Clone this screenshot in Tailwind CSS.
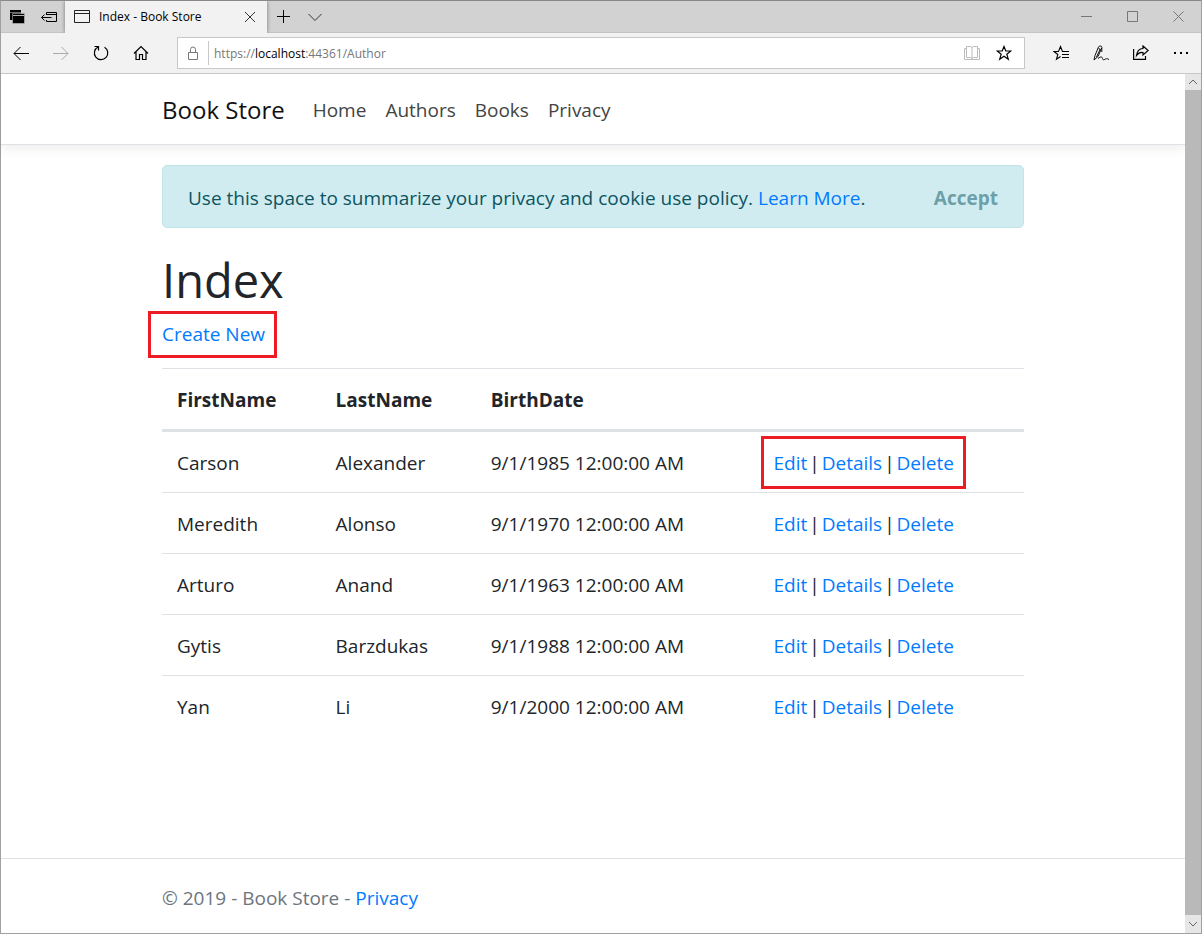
<!DOCTYPE html>
<html lang="en">
<head>
<meta charset="utf-8">
<meta name="viewport" content="width=device-width, initial-scale=1">
<title>Index - Book Store</title>
<script src="https://cdn.jsdelivr.net/npm/@tailwindcss/browser@4"></script>
</head>
<body class="bg-white font-['Open_Sans','Noto_Sans',sans-serif] text-[19px] leading-[30px] text-[#212529]">
<div class="flex min-h-screen flex-col border border-[#a0a0a0] border-t-[#888]">

  <!-- Tab strip -->
  <div class="flex h-8 items-stretch border-b border-[#c4c4c4] bg-[#d2d2d2] text-xs text-black">
    <div class="flex w-16 items-center">
      <button type="button" aria-label="Tabs set aside" class="flex w-8 justify-center"><svg class="size-4" viewBox="0 0 16 16"><path d="M1 1h11v10H1z" fill="#000"/><path d="M1 3.500h11" stroke="#999" stroke-width=".7"/><path d="M3.500 4.500h12v10h-12z" fill="#000" stroke="#d2d2d2" stroke-width=".5"/><path d="M4 6.500h11" stroke="#ddd" stroke-width=".8"/></svg></button>
      <button type="button" aria-label="Set tabs aside" class="flex w-8 justify-center"><svg class="size-4" viewBox="0 0 16 16" fill="none" stroke="#000"><path d="M5.500 6V3.500h10v9h-10V11M5.500 5.500h10M.5 8.500h10M3.500 5.500l-3 3 3 3"/></svg></button>
    </div>
    <div class="-mb-px flex w-[202px] items-center bg-[#f2f2f2] px-[9px] shadow-[0_0_4px_#777] [clip-path:inset(0_-4px_0_-4px)]">
      <svg class="size-4" viewBox="0 0 16 16" fill="none" stroke="#222"><path d="M.5 1.500h15v12H.5zM.5 4.500h15"/></svg>
      <span class="ml-[9px] flex-1">Index - Book Store</span>
      <button type="button" aria-label="Close tab" class="mr-0.5"><svg class="size-3" viewBox="0 0 12 12" fill="none" stroke="#333"><path d="M1 1l10 10M11 1L1 11"/></svg></button>
    </div>
    <button type="button" aria-label="New tab" class="flex w-8 items-center justify-center"><svg class="size-[13px]" viewBox="0 0 13 13" stroke="#000"><path d="M0 6.500h13M6.500 0v13"/></svg></button>
    <button type="button" aria-label="Tab actions" class="flex w-8 items-center justify-center"><svg class="size-[14px]" viewBox="0 0 14 14" fill="none" stroke="#333"><path d="M.5 4l6.500 6.500L13.500 4"/></svg></button>
    <div class="ml-auto flex">
      <button type="button" aria-label="Minimize" class="flex w-[46px] items-center justify-center"><svg class="size-[11px]" viewBox="0 0 11 11" stroke="#777"><path d="M0 5.500h11"/></svg></button>
      <button type="button" aria-label="Maximize" class="flex w-[46px] items-center justify-center"><svg class="size-[11px]" viewBox="0 0 11 11" fill="none" stroke="#777"><path d="M.5.5h10v10H.5z"/></svg></button>
      <button type="button" aria-label="Close" class="flex w-[46px] items-center justify-center"><svg class="size-[11px]" viewBox="0 0 11 11" stroke="#777"><path d="M.5.500l10 10M10.500.500l-10 10"/></svg></button>
    </div>
  </div>

  <!-- Address bar -->
  <div class="flex h-[41px] items-center border-b border-[#c8c8c8] bg-[#f2f2f2] text-xs">
    <div class="flex w-44 shrink-0">
      <button type="button" aria-label="Back" class="flex w-10 justify-center"><svg class="size-4" viewBox="0 0 16 16" fill="none" stroke="#000"><path d="M1 8.500h15M7.500 2L1 8.500 7.500 15"/></svg></button>
      <button type="button" aria-label="Forward" class="flex w-10 justify-center"><svg class="size-4" viewBox="0 0 16 16" fill="none" stroke="#aaa"><path d="M0 8.500h15M8.500 2L15 8.500 8.500 15"/></svg></button>
      <button type="button" aria-label="Refresh" class="flex w-10 justify-center"><svg class="size-4" viewBox="0 0 16 16" fill="none" stroke="#000" stroke-width="1.200"><path d="M11.500 2.200A6.700 6.700 0 1 1 5 2M1.500 1.500h4v4"/></svg></button>
      <button type="button" aria-label="Home" class="flex w-10 justify-center"><svg class="size-4" viewBox="0 0 16 16" fill="none" stroke="#000" stroke-width="1.200"><path d="M1 8.500l7-7 7 7M3 7v7.500h3.500V9.500h3v5H13V7"/></svg></button>
    </div>
    <form class="flex h-8 flex-1 items-center border border-[#c8c8c8] bg-white">
      <svg class="mx-2 size-[14px]" viewBox="0 0 14 14" fill="none" stroke="#777"><path d="M2.500 6.500h9v7h-9zM4.500 6.500V3.500a2.500 2.500 0 0 1 5 0v3"/></svg>
      <div class="h-6 w-px bg-[#c8c8c8]"></div>
      <div role="textbox" contenteditable="true" spellcheck="false" aria-label="Address" class="ml-[5px] flex-1 pt-0.5 text-[#777] outline-none">https://<span class="text-black">localhost</span>:44361/Author</div>
      <button type="button" aria-label="Reading view" class="flex w-8 justify-center"><svg class="size-4" viewBox="0 0 16 16" fill="none" stroke="#bbb"><path d="M2.500 1.500h4l1.500 1 1.500-1h4v11h-4l-1.500 1-1.500-1h-4zM8 2.500v11M2.500 3.500h-2v11h15v-11h-2"/></svg></button>
      <button type="button" aria-label="Add to favorites" class="mr-1 flex w-8 justify-center"><svg class="size-4" viewBox="0 0 16 16" fill="none" stroke="#000" stroke-width="1.200"><path d="M8 1.500l1.800 4.500h5l-4 3.200 1.500 5L8 11.300l-4.300 2.900 1.500-5-4-3.200h5z"/></svg></button>
    </form>
    <div class="ml-4 flex">
      <button type="button" aria-label="Favorites" class="flex w-10 justify-center"><svg class="size-4" viewBox="0 0 16 16" fill="none" stroke="#000" stroke-width="1.100"><path d="M16 6.500H9.500L7.500 1.500 5.500 6.500H1l3.800 3-1.300 4.800L7.500 11.500M9 9.500h7M9 12.500h7"/></svg></button>
      <button type="button" aria-label="Add notes" class="flex w-10 justify-center"><svg class="size-4" viewBox="0 0 16 16" fill="none" stroke="#111"><path d="M1 15l1-4.500L5.500 2c.8-1.600 4-1.200 3.300.8L5 11.500zM5.500 3.500l2 .8M7.300 4L3.500 12M8.800 3v4M5 13.500c3-2.500 4.500-1.500 4.500 0s1.500 1.500 2.500.8 2-1 4 .2"/></svg></button>
      <button type="button" aria-label="Share" class="flex w-10 justify-center"><svg class="size-4" viewBox="0 0 16 16" fill="none" stroke="#000" stroke-width="1.200"><path d="M.600 4v10.400h11.900v-3.400M10 1l5.200 4.500-5.200 4.500V7.500C7 7 5 8.500 3.500 10.500 4 6.500 6.500 3.700 10 3.500z"/></svg></button>
      <button type="button" aria-label="Settings and more" class="flex w-10 justify-center"><svg class="size-4" viewBox="0 0 16 16"><path d="M1 7h2v2H1zM7 7h2v2H7zM13 7h2v2h-2z"/></svg></button>
    </div>
  </div>

  <!-- Page viewport -->
  <div class="flex flex-1">
    <div class="flex min-w-0 flex-1 flex-col">
      <header class="border-b border-[#dee2e6] pt-[6px] pb-[4px] shadow-[0_5px_10px_rgba(0,0,0,0.06)]">
        <nav class="mx-auto flex h-[60px] max-w-[862px] items-center">
          <a href="#" class="text-2xl text-[#111]">Book Store</a>
          <div class="ml-7 flex gap-[19px] text-[#444]">
            <a href="#">Home</a><a href="#">Authors</a><a href="#">Books</a><a href="#">Privacy</a>
          </div>
        </nav>
      </header>

      <main class="mx-auto w-full max-w-[862px] flex-1 pt-5">
        <div role="alert" class="flex h-[63px] items-center justify-between rounded-[5px] border border-[#bee5eb] bg-[#d1ecf1] px-[25px] pt-0.5 text-[#0c5460]">
          <p>Use this space to summarize your privacy and cookie use policy. <a href="#" class="text-[#007bff]">Learn More</a>.</p>
          <button type="button" class="font-bold text-[#6c9fa8]">Accept</button>
        </div>
        <h1 class="mt-[22px] text-[47px] leading-[60px]">Index</h1>
        <p class="mt-[9px]"><span class="relative inline-block"><a href="#" class="text-[#007bff]">Create New</a><span class="pointer-events-none absolute -top-2 -right-3 -bottom-[9px] -left-3.5 border-3 border-[#ed1c24]"></span></span></p>

        <table class="mt-[19px] w-full table-fixed border-separate border-spacing-0 text-left">
          <thead>
            <tr class="[&>th]:h-16 [&>th]:border-t [&>th]:border-b-3 [&>th]:border-[#dee2e6] [&>th]:pt-0.5 [&>th]:pl-[15px]">
              <th class="w-[18.4%] font-bold">FirstName</th>
              <th class="w-[18%] font-bold">LastName</th>
              <th class="w-[32.8%] font-bold">BirthDate</th>
              <th></th>
            </tr>
          </thead>
          <tbody class="[&_a]:text-[#007bff] [&_td]:h-[61px] [&_td]:border-b [&_td]:border-[#dee2e6] [&_td]:pt-0.5 [&_td]:pl-[15px] [&_tr:last-child>td]:border-transparent">
            <tr><td>Carson</td><td>Alexander</td><td>9/1/1985 12:00:00 AM</td><td><div class="relative flex w-fit gap-0.5"><a href="#">Edit</a><span>|</span><a href="#">Details</a><span>|</span><a href="#">Delete</a><span class="pointer-events-none absolute -inset-x-3 -top-3 -bottom-[11px] border-3 border-[#ed1c24]"></span></div></td></tr>
            <tr><td>Meredith</td><td>Alonso</td><td>9/1/1970 12:00:00 AM</td><td><div class="flex gap-0.5"><a href="#">Edit</a><span>|</span><a href="#">Details</a><span>|</span><a href="#">Delete</a></div></td></tr>
            <tr><td>Arturo</td><td>Anand</td><td>9/1/1963 12:00:00 AM</td><td><div class="flex gap-0.5"><a href="#">Edit</a><span>|</span><a href="#">Details</a><span>|</span><a href="#">Delete</a></div></td></tr>
            <tr><td>Gytis</td><td>Barzdukas</td><td>9/1/1988 12:00:00 AM</td><td><div class="flex gap-0.5"><a href="#">Edit</a><span>|</span><a href="#">Details</a><span>|</span><a href="#">Delete</a></div></td></tr>
            <tr><td>Yan</td><td>Li</td><td>9/1/2000 12:00:00 AM</td><td><div class="flex gap-0.5"><a href="#">Edit</a><span>|</span><a href="#">Details</a><span>|</span><a href="#">Delete</a></div></td></tr>
          </tbody>
        </table>
      </main>

      <footer class="border-t border-[#dee2e6] text-[#6c757d]">
        <div class="mx-auto flex h-[74px] max-w-[862px] items-center pt-1">
          <p>© 2019 - Book Store - <a href="#" class="text-[#007bff]">Privacy</a></p>
        </div>
      </footer>
    </div>

    <!-- Scroll bar -->
    <div class="flex w-4 flex-col bg-[#b9b9b9]">
      <div class="flex h-4 items-center justify-center bg-[#e6e6e6]"><svg class="size-2" viewBox="0 0 8 8" fill="none" stroke="#666"><path d="M0 6l4-4 4 4"/></svg></div>
      <div class="mt-auto flex h-[18px] items-center justify-center bg-[#e6e6e6]"><svg class="size-2" viewBox="0 0 8 8" fill="none" stroke="#666"><path d="M0 2l4 4 4-4"/></svg></div>
    </div>
  </div>
</div>
</body>
</html>
